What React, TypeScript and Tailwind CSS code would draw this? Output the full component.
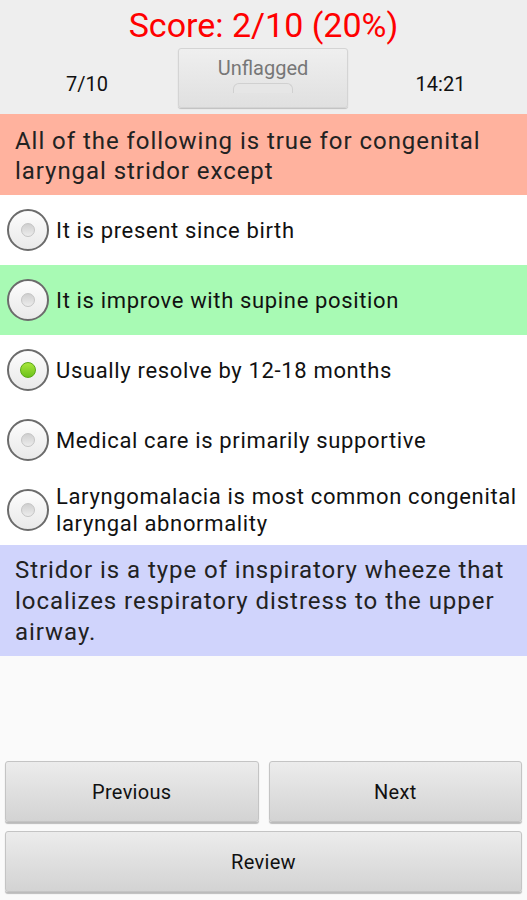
import React from "react";

const options = [
  { text: "It is present since birth", state: "none" },
  { text: "It is improve with supine position", state: "correct" },
  { text: "Usually resolve by 12-18 months", state: "chosen" },
  { text: "Medical care is primarily supportive", state: "none" },
  { text: "Laryngomalacia is most common congenital laryngal abnormality", state: "none" },
];

const Radio = ({ checked }: { checked: boolean }) => (
  <div className="w-[42px] h-[42px] shrink-0 rounded-full border-2 border-[#6b6b6b] bg-gradient-to-b from-[#fdfdfd] to-[#e9e9e9] flex items-center justify-center">
    {checked ? (
      <div className="w-[16px] h-[16px] rounded-full bg-gradient-to-b from-[#a8e63a] to-[#6bc21a] border border-[#5aa815]" />
    ) : (
      <div className="w-[14px] h-[14px] rounded-full bg-gradient-to-b from-[#cfcfcf] to-[#ececec] border border-[#c4c4c4]" />
    )}
  </div>
);

const Btn = ({ label, className }: { label: string; className?: string }) => (
  <button
    className={
      "h-[61px] rounded-[3px] border border-[#c4c4c4] bg-gradient-to-b from-[#ececec] to-[#d3d3d3] shadow-[0_2px_1px_rgba(0,0,0,0.25)] text-[20px] tracking-[0.3px] text-[#111] " +
      (className || "")
    }
  >
    {label}
  </button>
);

export default function App() {
  return (
    <div className="w-[527px] h-[900px] bg-[#fafafa] flex flex-col font-['Roboto','Liberation_Sans',sans-serif]">
      <div className="h-[114px] bg-[#eeeeee] flex flex-col items-center">
        <div className="text-[34px] leading-[40px] text-[#ff0000] mt-[5px]">Score: 2/10 (20%)</div>
        <div className="w-full flex items-start mt-[3px]">
          <div className="w-[174px] text-center text-[20px] text-[#111] pt-[21px]">7/10</div>
          <div className="w-[170px] h-[60px] ml-[4px] rounded-[3px] border border-[#d4d4d4] bg-gradient-to-b from-[#efefef] to-[#e0e0e0] shadow-[0_1px_1px_rgba(0,0,0,0.2)] flex flex-col items-center">
            <div className="text-[20px] leading-[24px] text-[#777] mt-[7px]">Unflagged</div>
            <div className="w-[60px] h-[10px] mt-[3px] rounded-t-[6px] border border-b-0 border-[#d0d0d0] bg-[#e6e6e6]" />
          </div>
          <div className="flex-1 text-center text-[20px] text-[#111] pt-[21px] pl-[6px]">14:21</div>
        </div>
      </div>
      <div className="h-[81px] bg-[#ffb29e] px-[15px] pt-[12px] text-[24px] leading-[30px] tracking-[0.95px] text-[#222]">
        All of the following is true for congenital laryngal stridor except
      </div>
      {options.map((o, i) => (
        <div
          key={i}
          className={
            "h-[70px] flex items-center pl-[7px] gap-[7px] " +
            (o.state === "correct" ? "bg-[#a8fab4]" : "bg-white")
          }
        >
          <Radio checked={o.state === "chosen"} />
          <div className="text-[22px] leading-[27px] tracking-[0.65px] text-[#111]">{o.text}</div>
        </div>
      ))}
      <div className="h-[111px] bg-[#d0d4fc] px-[15px] pt-[10px] text-[24px] leading-[31px] tracking-[0.95px] text-[#222]">
        Stridor is a type of inspiratory wheeze that localizes respiratory distress to the upper airway.
      </div>
      <div className="flex-1" />
      <div className="px-[5px] pb-[8px] flex flex-col gap-[9px]">
        <div className="flex gap-[10px]">
          <Btn label="Previous" className="flex-1" />
          <Btn label="Next" className="flex-1" />
        </div>
        <Btn label="Review" className="w-full" />
      </div>
    </div>
  );
}
